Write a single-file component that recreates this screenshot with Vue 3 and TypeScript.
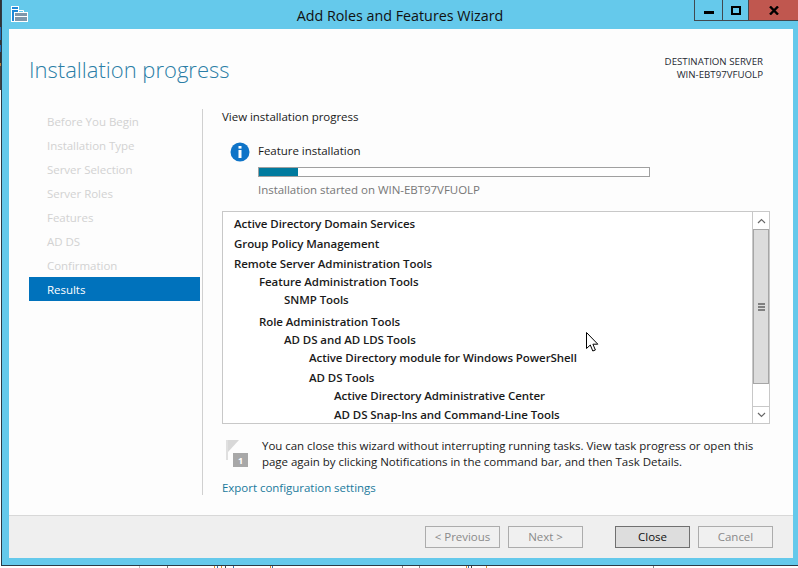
<script setup lang="ts">
const steps = ['Before You Begin', 'Installation Type', 'Server Selection', 'Server Roles', 'Features', 'AD DS', 'Confirmation']
const rows = [
  { t: 'Active Directory Domain Services', d: 0, h: 20 },
  { t: 'Group Policy Management', d: 0, h: 20 },
  { t: 'Remote Server Administration Tools', d: 0, h: 18 },
  { t: 'Feature Administration Tools', d: 1, h: 18 },
  { t: 'SNMP Tools', d: 2, h: 22 },
  { t: 'Role Administration Tools', d: 1, h: 18 },
  { t: 'AD DS and AD LDS Tools', d: 2, h: 18 },
  { t: 'Active Directory module for Windows PowerShell', d: 3, h: 20 },
  { t: 'AD DS Tools', d: 3, h: 18 },
  { t: 'Active Directory Administrative Center', d: 4, h: 19 },
  { t: 'AD DS Snap-Ins and Command-Line Tools', d: 4, h: 18 }
]
const buttons = ['< Previous', 'Next >']
const fragments = [
  { x: 139, c: '#bdbdbd' }, { x: 167, c: '#777777' }, { x: 214, c: '#d98a2b' }, { x: 217, c: '#3a6ea5' },
  { x: 221, c: '#d98a2b' }, { x: 225, c: '#444444' }, { x: 233, c: '#3a6ea5' }, { x: 270, c: '#d98a2b' },
  { x: 272, c: '#3a6ea5' }, { x: 402, c: '#888888' }, { x: 419, c: '#888888' }, { x: 466, c: '#d98a2b' },
  { x: 468, c: '#3a6ea5' }, { x: 471, c: '#444444' }, { x: 486, c: '#d98a2b' }, { x: 653, c: '#888888' }
]
</script>

<template>
  <div class="screen">
    <div class="edge"></div>
    <div class="window">
      <header class="titlebar">
        <svg class="app-icon" width="17" height="16" viewBox="0 0 17 16">
          <rect x="0.5" y="0.5" width="7" height="15" fill="#1e88d8" stroke="#fff" />
          <rect x="1" y="3" width="6" height="1" fill="#fff" />
          <rect x="3.5" y="6.5" width="13" height="9" fill="#7f97ab" stroke="#fff" />
          <path d="M7.5 6.5V4.5h5v2M4 10.5h12" fill="none" stroke="#fff" />
        </svg>
        <div class="title">Add Roles and Features Wizard</div>
        <div class="controls">
          <div class="ctl min"><i></i></div>
          <div class="ctl max"><i></i></div>
          <div class="ctl close">
            <svg width="10" height="9" viewBox="0 0 10 9"><path d="M1 0.5L9 8.5M9 0.5L1 8.5" stroke="#000" stroke-width="2.4" fill="none" /></svg>
          </div>
        </div>
      </header>
      <div class="client">
        <div class="head">
          <h1>Installation progress</h1>
          <div class="dest">DESTINATION SERVER<br />WIN-EBT97VFUOLP</div>
        </div>
        <div class="body">
          <nav class="nav">
            <div v-for="s in steps" :key="s" class="step">{{ s }}</div>
            <div class="step active">Results</div>
          </nav>
          <main class="main">
            <div class="view">View installation progress</div>
            <div class="feature">
              <svg class="info" width="20" height="20" viewBox="0 0 20 20">
                <circle cx="10" cy="10" r="9.5" fill="#0f74c8" />
                <rect x="8.5" y="8" width="3" height="8" fill="#fff" />
                <rect x="8.5" y="4" width="3" height="2.6" fill="#fff" />
              </svg>
              <div class="feature-col">
                <div class="feature-name">Feature installation</div>
                <div class="bar"><div class="fill" :style="{ width: '10%' }"></div></div>
                <div class="started">Installation started on WIN-EBT97VFUOLP</div>
              </div>
            </div>
            <div class="list">
              <div class="rows">
                <div v-for="r in rows" :key="r.t" class="row" :style="{ paddingLeft: r.d * 25 + 'px', height: r.h + 'px' }">{{ r.t }}</div>
              </div>
              <div class="scroll">
                <div class="arrow">
                  <svg width="9" height="6" viewBox="0 0 9 6"><path d="M1 5L4.5 1.5L8 5" fill="none" stroke="#666" stroke-width="1.2" /></svg>
                </div>
                <div class="thumb"><i></i><i></i><i></i></div>
                <div class="track"></div>
                <div class="arrow down">
                  <svg width="9" height="6" viewBox="0 0 9 6"><path d="M1 1L4.5 4.5L8 1" fill="none" stroke="#666" stroke-width="1.2" /></svg>
                </div>
              </div>
              <svg class="cursor" width="13" height="22" viewBox="0 0 13 22">
                <path d="M0.5 0.5V16.5L4.3 13L6.8 19L9.4 18L6.9 12.2H11.8Z" fill="#fff" stroke="#000" stroke-width="1" />
              </svg>
            </div>
            <div class="note">
              <svg class="flag" width="22" height="27" viewBox="0 0 22 27">
                <rect x="0" y="0" width="2" height="20" fill="#e0e0e0" />
                <path d="M2 0H13L2 12Z" fill="#d8d8d8" />
                <rect x="7" y="13" width="15" height="14" fill="#a8a8a8" />
                <text x="14.5" y="24" text-anchor="middle" class="flag-n">1</text>
              </svg>
              <div class="note-text">You can close this wizard without interrupting running tasks. View task progress or open this<br />page again by clicking Notifications in the command bar, and then Task Details.</div>
            </div>
            <a class="export">Export configuration settings</a>
          </main>
        </div>
        <footer class="footer">
          <button v-for="b in buttons" :key="b" class="btn off">{{ b }}</button>
          <button class="btn primary">Close</button>
          <button class="btn off">Cancel</button>
        </footer>
      </div>
    </div>
    <div class="under">
      <i v-for="f in fragments" :key="f.x" class="u" :style="{ left: f.x + 'px', background: f.c }"></i>
    </div>
  </div>
</template>

<style scoped>
.screen {
  position: relative;
  width: 798px;
  height: 568px;
  overflow: hidden;
  background: #fff;
  font-family: "Open Sans", "Noto Sans", sans-serif;
  font-size: 11.5px;
  letter-spacing: -0.03px;
  color: #1a1a1a;
  display: flex;
  flex-direction: column;
}
.edge {
  position: absolute;
  left: 0;
  top: 0;
  width: 1px;
  height: 90px;
  background: linear-gradient(#333 0 27px, #1d6fb8 27px 40px, #333 40px 45px, #1d6fb8 45px 52px, #333 52px 63px, #b9803a 63px 66px, #444 66px 90px);
}
.window {
  height: 566px;
  flex: none;
  margin-left: 1px;
  background: #65c9eb;
  border-left: 1px solid #2d3a46;
  border-bottom: 1px solid #2d3a46;
  display: flex;
  flex-direction: column;
  box-sizing: border-box;
}
.titlebar {
  height: 29px;
  flex: none;
  display: flex;
  position: relative;
  justify-content: center;
}
.app-icon {
  position: absolute;
  left: 9px;
  top: 6px;
}
.title {
  font-size: 14.3px;
  letter-spacing: 0;
  color: #111;
  padding-top: 6px;
  line-height: 19px;
}
.controls {
  position: absolute;
  right: 0;
  top: 0;
  display: flex;
  height: 21px;
  border-bottom: 1px solid #41494f;
  box-sizing: border-box;
}
.ctl {
  border-left: 1px solid #41494f;
  display: flex;
  align-items: center;
  justify-content: center;
  box-sizing: border-box;
}
.min { width: 28px; }
.min i { width: 10px; height: 3px; background: #000; margin-top: 4px; }
.max { width: 26px; }
.max i { width: 10px; height: 9px; border: 2px solid #000; box-sizing: border-box; }
.close { width: 50px; background: #c0574f; }
.client {
  flex: 1;
  min-height: 0;
  margin: 0 5px 7px 7px;
  background: #fdfdfd;
  display: flex;
  flex-direction: column;
}
.head {
  height: 80px;
  flex: none;
  display: flex;
  justify-content: space-between;
  padding: 25px 30px 0 20px;
  box-sizing: border-box;
}
h1 {
  margin: 0;
  font-size: 22px;
  letter-spacing: 0;
  font-weight: 300;
  line-height: 30px;
  color: #2b7ea6;
}
.dest {
  font-size: 9.7px;
  letter-spacing: 0;
  line-height: 13px;
  text-align: right;
  color: #1f2a33;
  margin-top: 1px;
}
.body {
  flex: 1;
  min-height: 0;
  display: flex;
}
.nav {
  width: 171px;
  margin-left: 20px;
  flex: none;
}
.step {
  height: 24px;
  box-sizing: border-box;
  padding: 1px 0 0 18px;
  line-height: 24px;
  color: #d2d2d2;
}
.step.active {
  background: #0072bc;
  color: #fff;
}
.main {
  margin-left: 2px;
  height: 386px;
  flex: 1;
  border-left: 1px solid #d0d0d0;
  padding: 0 23px 0 19px;
  box-sizing: border-box;
}
.view {
  height: 17px;
  line-height: 15px;
}
.feature {
  display: flex;
  margin-top: 16px;
  height: 60px;
  padding-left: 8px;
}
.info { flex: none; margin-right: 8px; }
.feature-col { width: 392px; }
.feature-name { line-height: 17px; }
.bar {
  height: 8px;
  border: 1px solid #a0a0a0;
  margin-top: 8px;
  background: #fff;
}
.fill { height: 100%; background: #007a9e; }
.started { color: #777; margin-top: 4px; line-height: 17px; }
.list {
  position: relative;
  height: 213px;
  width: 548px;
  box-sizing: border-box;
  margin-top: 9px;
  background: #fff;
  border: 1px solid #c8c8c8;
  display: flex;
  justify-content: space-between;
}
.rows { padding: 3px 0 0 11px; }
.row {
  font-weight: 600;
  letter-spacing: -0.07px;
  line-height: 18px;
  white-space: nowrap;
}
.scroll {
  width: 17px;
  flex: none;
  box-sizing: border-box;
  border-left: 1px solid #c8c8c8;
  display: flex;
  flex-direction: column;
}
.arrow {
  height: 17px;
  box-sizing: border-box;
  flex: none;
  display: flex;
  align-items: center;
  justify-content: center;
}
.down { border-top: 1px solid #c8c8c8; }
.thumb {
  height: 155px;
  flex: none;
  background: #dcdcdc;
  border: 1px solid #a6a6a6;
  box-sizing: border-box;
  display: flex;
  flex-direction: column;
  align-items: center;
  justify-content: center;
  gap: 1px;
}
.thumb i { width: 7px; height: 2px; background: #808080; }
.track { flex: 1; }
.cursor {
  position: absolute;
  left: 363px;
  top: 120px;
}
.note {
  display: flex;
  margin-top: 15px;
  padding-left: 4px;
  height: 34px;
}
.flag { flex: none; margin: 1px 14px 0 0; }
.flag-n { font-size: 9px; fill: #fff; font-weight: 700; }
.note-text { line-height: 16px; white-space: nowrap; margin-top: -1px; }
.export {
  display: block;
  margin-top: 6px;
  line-height: 17px;
  color: #1a7a9c;
}
.footer {
  height: 43px;
  flex: none;
  background: #efefef;
  border-top: 1px solid #d8d8d8;
  box-sizing: border-box;
  display: flex;
  align-items: flex-start;
  padding: 10px 0 0 416px;
  gap: 8px;
}
.btn {
  width: 75px;
  height: 22px;
  font: inherit;
  letter-spacing: inherit;
  padding: 0 0 2px;
  background: #f0f0f0;
  border: 1px solid #acacac;
  color: #8a8a8a;
}
.primary {
  margin-left: 24px;
  background: #dddddd;
  border-color: #707070;
  color: #111;
}
.under {
  flex: 1;
  position: relative;
}
.u { position: absolute; top: 0; width: 1px; height: 2px; }
</style>
